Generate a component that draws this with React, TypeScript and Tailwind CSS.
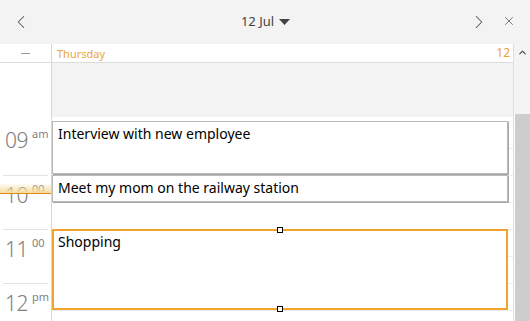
import { ChevronLeft, ChevronRight, ChevronUp, X } from 'lucide-react';

type CalEvent = {
  title: string;
  top: number;
  height: number;
  selected?: boolean;
};

const EVENTS: CalEvent[] = [
  { title: 'Interview with new employee', top: 4, height: 53 },
  { title: 'Meet my mom on the railway station', top: 58, height: 27 },
  { title: 'Shopping', top: 112, height: 81, selected: true },
];

const HOURS = [
  { h: '09', sup: 'am' },
  { h: '10', sup: '00' },
  { h: '11', sup: '00' },
  { h: '12', sup: 'pm' },
];

function HourLabel({ h, sup, first }: { h: string; sup: string; first: boolean }) {
  return (
    <div className="h-[54px] px-[3px]">
      <div className={`h-full ${first ? '' : 'border-t border-[#e2e2e2]'}`}>
        <div className="flex items-start pl-[2px] pt-[6px] text-[#808080]">
          <span className="text-[21px] leading-[26px] font-light tracking-[-0.5px]">{h}</span>
          <span className="ml-[4px] text-[11px] leading-[11px] mt-[1px]">{sup}</span>
        </div>
      </div>
    </div>
  );
}

export default function App() {
  return (
    <div className="w-[530px] h-[321px] overflow-hidden bg-white flex flex-col font-['Noto_Sans',sans-serif]">
      {/* top bar */}
      <header className="h-[44px] shrink-0 bg-[#f3f3f3] flex items-center text-[#555]">
        <button className="w-[41px] h-full flex items-center justify-center">
          <ChevronLeft size={22} strokeWidth={1.1} />
        </button>
        <div className="flex-1 flex items-center justify-center pl-[26px]">
          <span className="text-[13px] text-[#444]">12 Jul</span>
          <svg width="11" height="6" viewBox="0 0 11 6" className="ml-[5px]">
            <path d="M0 0 H11 L5.5 6 Z" fill="#444" />
          </svg>
        </div>
        <button className="w-[30px] h-full flex items-center justify-center">
          <ChevronRight size={22} strokeWidth={1.1} />
        </button>
        <button className="w-[30px] h-full flex items-center justify-center pb-[2px]">
          <X size={14} strokeWidth={1.3} />
        </button>
        <div className="w-[6px]" />
      </header>

      <div className="flex-1 flex min-h-0">
        <div className="flex-1 flex flex-col min-w-0">
          {/* day header */}
          <div className="h-[19px] shrink-0 flex border-b border-[#dcdcdc]">
            <div className="w-[52px] border-r border-[#d6d6d6] flex items-center justify-center">
              <div className="w-[9px] h-px bg-[#9a9a9a] mt-[1px]" />
            </div>
            <div className="flex-1 flex items-center justify-between pl-[5px] pr-[3px] text-[#eba534]">
              <span className="text-[11px] leading-none">Thursday</span>
              <span className="text-[12px] leading-none">12</span>
            </div>
          </div>

          {/* all-day area */}
          <div className="h-[54px] shrink-0 flex">
            <div className="w-[52px] border-r border-[#d6d6d6]" />
            <div className="flex-1 bg-[#f3f3f3]" />
          </div>

          {/* time grid */}
          <div className="flex-1 flex min-h-0 overflow-hidden">
            <div className="relative w-[52px] shrink-0 border-r border-[#d6d6d6] pt-[4px]">
              {HOURS.map((x, i) => (
                <HourLabel key={x.h} h={x.h} sup={x.sup} first={i === 0} />
              ))}
              {/* current time marker */}
              <div className="absolute left-0 right-0 top-[66px] h-[11px] bg-gradient-to-b from-[#fdf6e3]/0 to-[#f7dc9c] border-b-[1.5px] border-[#dd8a12]" />
            </div>

            <div className="relative flex-1 pt-[4px]">
              {Array.from({ length: 8 }).map((_, i) => (
                <div key={i} className="h-[27px] border-t border-[#ececec]" />
              ))}

              {EVENTS.map((ev) =>
                ev.selected ? (
                  <div
                    key={ev.title}
                    className="absolute left-0 right-[5px] border-2 border-[#f0a42c] bg-white"
                    style={{ top: ev.top, height: ev.height }}
                  >
                    <div className="pl-[4px] pt-[1px] text-[14px] leading-[20px] text-black">{ev.title}</div>
                    <div className="absolute left-1/2 -top-[4px] w-[6px] h-[6px] -ml-[3px] bg-white border border-black" />
                    <div className="absolute left-1/2 -bottom-[4px] w-[6px] h-[6px] -ml-[3px] bg-white border border-black" />
                  </div>
                ) : (
                  <div
                    key={ev.title}
                    className="absolute left-0 right-[5px] border border-[#b9b9b9] bg-white shadow-[1px_1px_0_#a8a8a8]"
                    style={{ top: ev.top, height: ev.height }}
                  >
                    <div className="pl-[5px] pt-[2px] text-[14px] leading-[20px] text-black">{ev.title}</div>
                  </div>
                )
              )}
            </div>
          </div>
        </div>

        {/* scrollbar */}
        <div className="w-[17px] shrink-0 border-l border-[#dedede] flex flex-col">
          <div className="h-[70px] bg-[#f4f4f4] flex justify-center pt-[3px]">
            <ChevronUp size={11} strokeWidth={2.5} className="text-[#444]" />
          </div>
          <div className="flex-1 ml-px bg-[#cdcdcd]" />
        </div>
      </div>
    </div>
  );
}
